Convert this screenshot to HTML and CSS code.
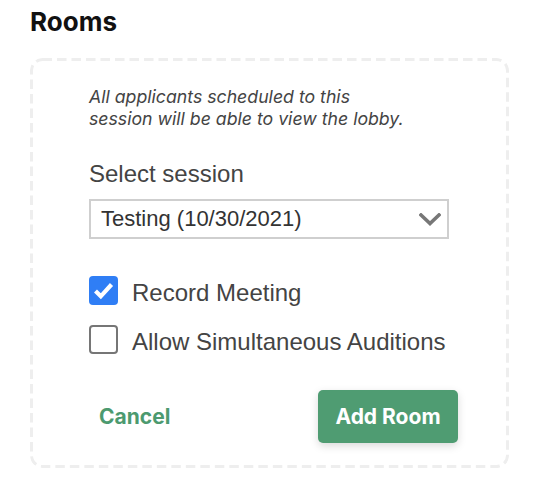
FILE: index.html
```html
<!DOCTYPE html>
<html>
<head>
<meta charset="utf-8">
<link rel="stylesheet" href="styles.css">
</head>
<body>
<div class="page">
  <h2 class="title">Rooms</h2>
  <div class="card">
    <p class="note">All applicants scheduled to this<br>session will be able to view the lobby.</p>
    <div class="field-label">Select session</div>
    <div class="select">
      <span class="select-text">Testing (10/30/2021)</span>
      <svg class="chevron" width="22" height="13" viewBox="0 0 22 13"><path d="M2 2 L11 10.5 L20 2" fill="none" stroke="#777" stroke-width="3.6" stroke-linecap="square"/></svg>
    </div>
    <div class="checks">
      <label class="check-row">
        <span class="box box-on"><svg width="29" height="29" viewBox="0 0 29 29"><path d="M6.5 15 L11.8 20.3 L22.5 8.5" fill="none" stroke="#fff" stroke-width="4.2" stroke-linecap="butt"/></svg></span>
        <span class="check-label">Record Meeting</span>
      </label>
      <label class="check-row">
        <span class="box box-off"></span>
        <span class="check-label">Allow Simultaneous Auditions</span>
      </label>
    </div>
    <div class="actions">
      <button class="btn-cancel">Cancel</button>
      <button class="btn-add">Add Room</button>
    </div>
  </div>
</div>
</body>
</html>
```
FILE: styles.css
```css
html, body {
  margin: 0;
  padding: 0;
  background: #fff;
}
.page {
  padding: 7px 0 0 30px;
  font-family: "Liberation Sans", Arial, sans-serif;
}
.title {
  margin: 0;
  font-family: Inter, sans-serif;
  font-weight: 700;
  font-size: 26px;
  line-height: 30px;
  color: #111;
}
.card {
  margin-top: 21px;
  width: 479px;
  height: 410px;
  box-sizing: border-box;
  border-radius: 12px;
  padding: 28px 60px 25px 59px;
  background-image: url("data:image/svg+xml;utf8,<svg xmlns='http://www.w3.org/2000/svg' width='479' height='410'><rect x='1.5' y='1.5' width='476' height='407' rx='11' fill='none' stroke='%23eeeeee' stroke-width='3' stroke-dasharray='9.5 5'/></svg>");
  background-repeat: no-repeat;
}
.note {
  margin: 0;
  font-family: Inter, sans-serif;
  font-style: italic;
  font-size: 17.7px;
  line-height: 22px;
  color: #444;
}
.field-label {
  margin-top: 30px;
  font-size: 24px;
  line-height: 28px;
  color: #444;
}
.select {
  margin-top: 11px;
  height: 40px;
  box-sizing: border-box;
  border: 2px solid #cfcfcf;
  display: flex;
  align-items: center;
  justify-content: space-between;
  padding: 0 6px 0 10px;
}
.select-text {
  font-size: 22px;
  color: #333;
}
.chevron {
  display: block;
}
.checks {
  margin-top: 37px;
  display: flex;
  flex-direction: column;
  gap: 20px;
}
.check-row {
  display: flex;
  align-items: flex-start;
  gap: 14px;
  height: 29px;
}
.box {
  width: 29px;
  height: 29px;
  box-sizing: border-box;
  border-radius: 4px;
  flex: none;
}
.box svg {
  display: block;
}
.box-on {
  background: #2f7ef5;
}
.box-off {
  border: 2px solid #767676;
  background: #fff;
}
.check-label {
  margin-top: 3px;
  font-size: 24px;
  line-height: 28px;
  color: #444;
}
.actions {
  margin-top: 36px;
  margin-right: -9px;
  display: flex;
  justify-content: space-between;
  align-items: center;
}
.btn-cancel {
  border: none;
  background: none;
  padding: 0 10px;
  font-family: Inter, sans-serif;
  font-weight: 700;
  font-size: 21px;
  color: #4c9a6f;
}
.btn-add {
  width: 140px;
  height: 53px;
  border: none;
  border-radius: 5px;
  background: #4f9c72;
  color: #fff;
  font-family: Inter, sans-serif;
  font-weight: 700;
  font-size: 21px;
  box-shadow: 0 3px 8px rgba(0, 0, 0, 0.15);
}
```
